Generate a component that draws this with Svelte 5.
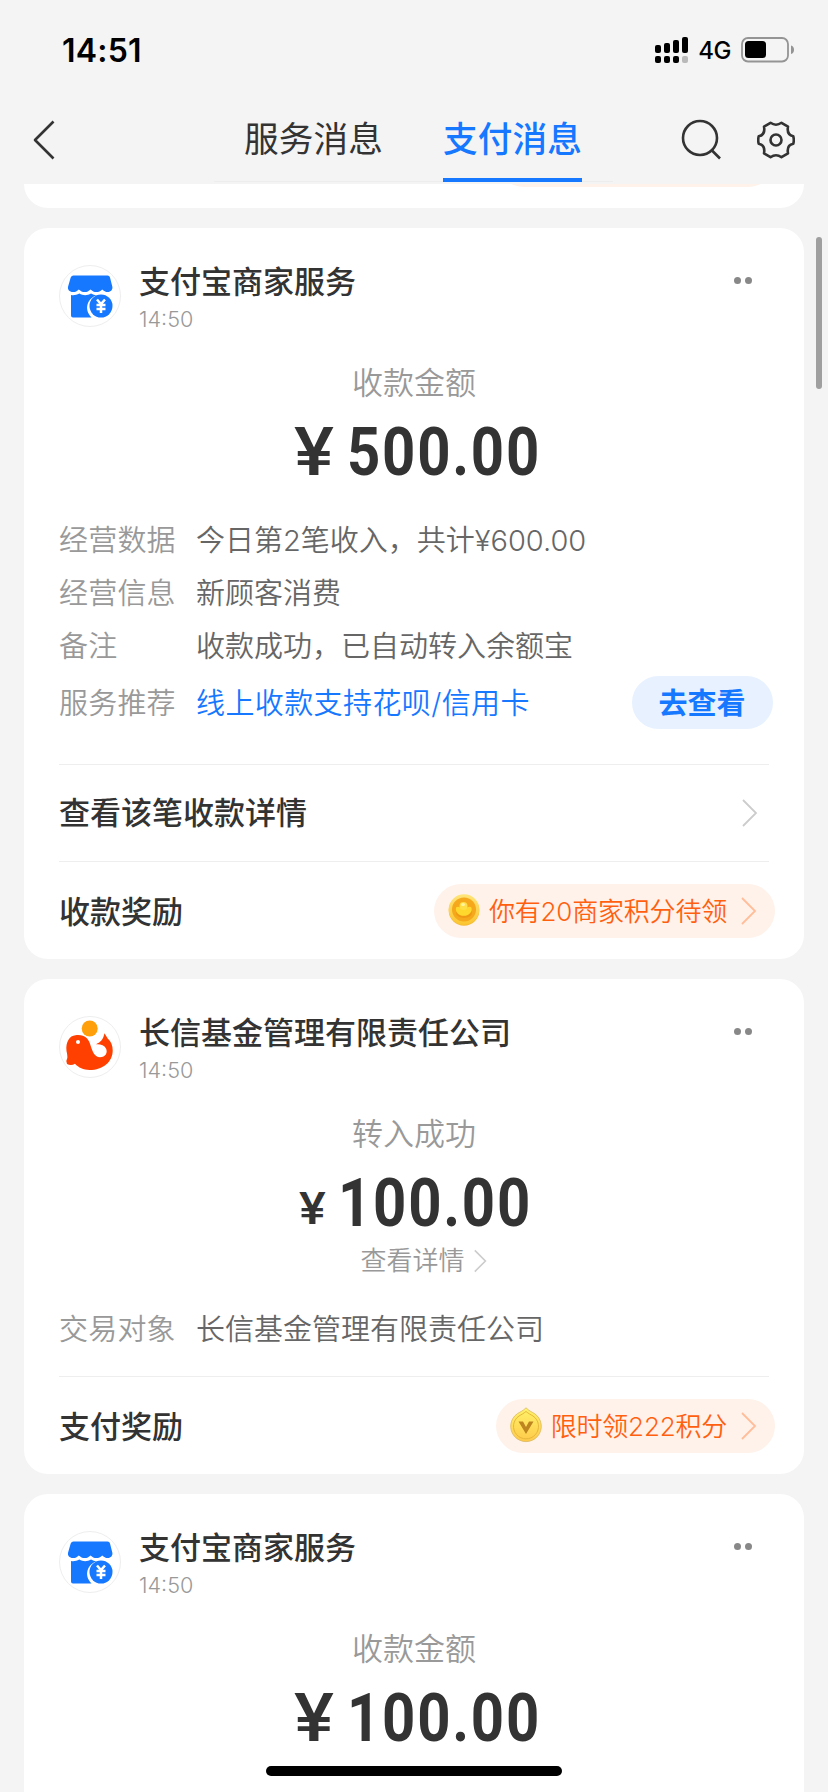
<script lang="ts">
  type Row = { label: string; value: string; action?: string };
  type Message = {
    sender: string;
    icon: "shop" | "fund";
    time: string;
    title: string;
    amount: string;
    smallSign?: boolean;
    more?: string;
    rows?: Row[];
    detail?: string;
    reward?: { label: string; text: string; coin: "ingot" | "drop" };
  };

  const messages: Message[] = [
    {
      sender: "支付宝商家服务",
      icon: "shop",
      time: "14:50",
      title: "收款金额",
      amount: "500.00",
      rows: [
        { label: "经营数据", value: "今日第2笔收入，共计¥600.00" },
        { label: "经营信息", value: "新顾客消费" },
        { label: "备注", value: "收款成功，已自动转入余额宝" },
        { label: "服务推荐", value: "线上收款支持花呗/信用卡", action: "去查看" },
      ],
      detail: "查看该笔收款详情",
      reward: { label: "收款奖励", text: "你有20商家积分待领", coin: "ingot" },
    },
    {
      sender: "长信基金管理有限责任公司",
      icon: "fund",
      time: "14:50",
      title: "转入成功",
      amount: "100.00",
      smallSign: true,
      more: "查看详情",
      rows: [{ label: "交易对象", value: "长信基金管理有限责任公司" }],
      reward: { label: "支付奖励", text: "限时领222积分", coin: "drop" },
    },
    {
      sender: "支付宝商家服务",
      icon: "shop",
      time: "14:50",
      title: "收款金额",
      amount: "100.00",
    },
  ];
</script>

{#snippet chevron(cls: string)}
  <svg class="chevron {cls}" viewBox="0 0 16 28"><path d="M1 1 14 14 1 27" /></svg>
{/snippet}

<div class="screen">
  <div class="status">
    <span class="clock">14:51</span>
    <div class="status-right">
      <svg class="signal" width="34" height="27" viewBox="0 0 34 27">
        <rect x="0" y="8" width="6" height="8" rx="2" />
        <rect x="9" y="6" width="6" height="10" rx="2" />
        <rect x="18" y="3" width="6" height="13" rx="2" />
        <rect x="27" y="0" width="6" height="16" rx="2" />
        <rect x="0" y="19" width="6" height="7" rx="2" />
        <rect x="9" y="19" width="6" height="7" rx="2" />
        <rect x="18" y="19" width="6" height="7" rx="2" />
        <rect x="27" y="19" width="6" height="7" rx="2" fill="#b9b9b9" />
      </svg>
      <span class="network">4G</span>
      <svg width="54" height="26" viewBox="0 0 54 26">
        <rect x="1" y="1" width="46" height="23.5" rx="6" fill="none" stroke="#949494" stroke-width="1.8" />
        <rect x="4" y="4" width="21" height="17" rx="3.5" />
        <path d="M50 8.5c4 1 4 7.500 0 8.500z" fill="#949494" />
      </svg>
    </div>
  </div>

  <nav class="nav">
    <svg class="back" width="24" height="40" viewBox="0 0 24 40"><path d="M21.500 1.500 3 20l18.500 18.500" /></svg>
    <div class="tabs">
      <div class="tab">服务消息</div>
      <div class="tab active">支付消息</div>
    </div>
    <svg class="tool search" width="42" height="42" viewBox="0 0 42 42">
      <circle cx="19" cy="19" r="17" />
      <path d="m30.500 31 8.500 8.500" />
    </svg>
    <svg class="tool" width="38" height="38" viewBox="0 0 38 38">
      <path d="M13.500 1.800Q19 5.600 24.500 1.800L31 5.600C30 11 32 14.500 36.300 15.300Q37.300 19 36.300 22.700C32 23.500 30 27 31 32.400L24.500 36.200Q19 32.400 13.500 36.200L7 32.400C8 27 6 23.500 1.700 22.700Q.7 19 1.700 15.300C6 14.500 8 11 7 5.600Z" />
      <circle cx="19" cy="19" r="5.500" />
    </svg>
  </nav>

  <main class="feed">
    <div class="card previous"><div class="previous-pill"></div></div>

    {#each messages as msg}
      <section class="card">
        <header class="head">
          <div class="avatar">
            {#if msg.icon === "shop"}
              <svg viewBox="0 0 60 60">
                <path fill="#1677ff" d="M13.500 9.500h34q2 0 2.500 2l2.300 9c.7 3-1.500 5.500-4.500 5.500-2.500 0-3.800-1.300-5.600-2.600-2 1.800-3.500 2.600-5.800 2.600s-4-1-5.900-2.600c-1.800 1.600-3.500 2.600-5.800 2.600s-4-1-5.900-2.600C17 25 15.500 26 13 26 9.500 26 7.300 23.500 8.100 20.500l2.600-9Q11.500 9.500 13.500 9.500z" />
                <path fill="#1677ff" d="M11 29c3 .6 5.700-.2 8.300-1.500 3.700 2.300 8 2.300 11.700 0q3.500 2 6 1.600C28 32 23 43 31.500 51.500H13q-2 0-2-2z" />
                <circle cx="41" cy="40" r="11.500" fill="#1677ff" />
                <path fill="none" stroke="#fff" stroke-width="2.500" d="m37 33.500 4 4.500 4-4.500M41 38v9M36.500 39h9M36.500 43h9" />
              </svg>
            {:else}
              <svg viewBox="0 0 60 60">
                <circle cx="29.700" cy="11.500" r="8" fill="#ff9f0a" />
                <path fill="#ff4001" d="M6.500 34C5.500 25 9.500 18.500 15.500 18.200c9-1 12.500 3 14.500 8.500C32.500 34 34 40 40 40.200c5.500 0 8-4.500 6-8.700-1.700-3.500-5.500-4.500-10-4.200 5-2.300 7.200-5 8.500-11l3.200 5.200c3.500 3 5 7 5 12C52.700 45 43 53 29.500 53c-6 0-11-2.300-14.500-6.200q-4 2.500-8 .2-1.500-3 .3-6c.3-1.500-.2-4.500-.8-7z" />
                <circle cx="18" cy="25" r="2" fill="#fff" />
              </svg>
            {/if}
          </div>
          <div class="who">
            <h2>{msg.sender}</h2>
            <time>{msg.time}</time>
          </div>
          <div class="dots"><i></i><i></i></div>
        </header>

        <div class="title">{msg.title}</div>
        <div class="amount" class:small-sign={msg.smallSign}>
          <span class="sign">¥</span><span class="digits">{msg.amount}</span>
        </div>
        {#if msg.more}
          <div class="more">{msg.more}{@render chevron("tiny")}</div>
        {/if}

        {#if msg.rows}
          <dl class="rows">
            {#each msg.rows as row}
              <div class="row" class:service={row.action}>
                <dt>{row.label}</dt>
                <dd>{row.value}</dd>
                {#if row.action}<button>{row.action}</button>{/if}
              </div>
            {/each}
          </dl>
        {/if}

        {#if msg.detail}
          <div class="link"><span>{msg.detail}</span>{@render chevron("grey")}</div>
        {/if}
        {#if msg.reward}
          <div class="link reward">
            <span>{msg.reward.label}</span>
            <div class="pill">
              {#if msg.reward.coin === "ingot"}
                <svg class="coin" width="32" height="34" viewBox="0 0 32 34">
                  <defs>
                    <linearGradient id="rim" x2="0" y2="1">
                      <stop offset="0" stop-color="#ffe57a" />
                      <stop offset="1" stop-color="#fbc52f" />
                    </linearGradient>
                  </defs>
                  <circle cx="16" cy="17.500" r="15.300" fill="#f4bc3a" />
                  <circle cx="16" cy="16.500" r="15.300" fill="url(#rim)" />
                  <circle cx="16" cy="16.500" r="12" fill="#f5a81c" />
                  <ellipse cx="16" cy="20" rx="8" ry="5" fill="#ee9914" />
                  <path fill="#ffd82e" d="M8 14.500q2-1.500 4 0h7q2.500-1.500 4.500 0c1 5-3 8.300-7.700 8.300S7 19.500 8 14.500z" />
                  <circle cx="15.500" cy="13" r="4" fill="#ffdf45" />
                  <ellipse cx="15" cy="11.500" rx="2" ry="1.500" fill="#fff3a0" />
                </svg>
              {:else}
                <svg class="coin" width="32" height="36" viewBox="0 0 32 36">
                  <defs>
                    <linearGradient id="drop" x2="0" y2="1">
                      <stop offset="0" stop-color="#fff36a" />
                      <stop offset="1" stop-color="#ffc94a" />
                    </linearGradient>
                  </defs>
                  <path fill="url(#drop)" stroke="#d9b860" stroke-width=".8" d="M16 .8c3 3 5.500 4 8.500 5.800a15.300 15.300 0 1 1-17 0C10.500 4.800 13 3.800 16 .8z" />
                  <path fill="none" stroke="#e6b73c" d="M16 4.500c2.500 2 4.500 3 7 4.500a12.500 12.500 0 1 1-14 0c2.500-1.500 4.500-2.500 7-4.500z" />
                  <path fill="#bd8420" d="M8.500 14.500h4.500l3 5.500 3-5.500h4.500L16 27z" />
                </svg>
              {/if}
              <span>{msg.reward.text}</span>
              {@render chevron("orange")}
            </div>
          </div>
        {/if}
      </section>
    {/each}
  </main>

  <div class="scrollbar"></div>
  <div class="home"></div>
</div>

<style>
  :global(body) { margin: 0; background: #f4f4f4; }

  .screen {
    position: relative;
    display: flex;
    flex-direction: column;
    width: 828px;
    height: 1792px;
    overflow: hidden;
    background: #f4f4f4;
    color: #333;
    font-family: Inter, "Noto Sans CJK SC", sans-serif;
  }

  /* Status bar */
  .status {
    display: flex;
    align-items: center;
    justify-content: space-between;
    flex: none;
    box-sizing: border-box;
    height: 96px;
    padding: 4px 33px 0 62px;
    color: #000;
  }
  .clock { font-size: 32px; font-weight: 600; letter-spacing: 0.2px; }
  .status-right { display: flex; align-items: center; }
  .network { margin: 1px 10px 0 9px; font-size: 24px; font-weight: 500; letter-spacing: -0.5px; }

  /* Navigation */
  .nav {
    display: flex;
    align-items: center;
    flex: none;
    box-sizing: border-box;
    height: 88px;
    padding: 0 33px 0 32px;
  }
  .back, .tool { flex: none; fill: none; stroke: #333; stroke-width: 2.6; stroke-linejoin: round; }
  .tabs {
    display: flex;
    justify-content: space-between;
    box-sizing: border-box;
    width: 400px;
    height: 86px;
    margin: 0 68px 0 158px;
    padding: 0 31px 0 30px;
    border-bottom: 1px solid #ededed;
    align-self: flex-start;
  }
  .tab {
    box-sizing: border-box;
    width: 139px;
    height: 86px;
    font-size: 34.7px;
    line-height: 87px;
    text-align: center;
    white-space: nowrap;
  }
  .tab.active {
    border-bottom: 4px solid #1677ff;
    color: #1677ff;
    font-weight: 500;
  }
  .search { margin-right: 34px; }

  /* Cards */
  .feed {
    display: flex;
    flex-direction: column;
    flex: 1;
    min-height: 0;
    gap: 20px;
    padding: 0 24px;
    overflow: hidden;
  }
  .card {
    flex: none;
    padding: 0 35px;
    border-radius: 24px;
    background: #fff;
  }
  .card:last-child { min-height: 730px; }
  .previous {
    display: flex;
    justify-content: flex-end;
    height: 24px;
    padding-right: 29px;
    border-radius: 0 0 24px 24px;
    overflow: hidden;
  }
  .previous-pill {
    width: 278px;
    height: 54px;
    margin-top: -51px;
    border-radius: 27px;
    background: #fff2ea;
  }
  .head { display: flex; height: 103px; }
  .avatar {
    box-sizing: border-box;
    width: 62px;
    height: 62px;
    margin-top: 37px;
    border: 1px solid #eee;
    border-radius: 50%;
  }
  .avatar svg { display: block; }
  .who { flex: 1; margin: 36px 0 0 18px; }
  h2 { margin: 0; font-size: 31px; font-weight: 500; line-height: 36px; }
  time {
    display: block;
    margin-top: 7px;
    color: #999;
    font-size: 21.6px;
    font-weight: 300;
    line-height: 24px;
  }
  .dots { display: flex; gap: 4px; margin: 49px 17px 0 0; }
  .dots i { width: 7px; height: 7px; border-radius: 50%; background: #888; }

  .title {
    margin-top: 32px;
    color: #999;
    font-size: 31px;
    font-weight: 350;
    line-height: 40px;
    text-align: center;
  }
  .amount {
    display: flex;
    align-items: baseline;
    justify-content: center;
    height: 68px;
    margin-top: 15px;
    padding-left: 7px;
    font-family: Roboto, sans-serif;
    font-size: 66px;
    font-weight: 600;
    line-height: 70px;
  }
  .sign {
    display: flex;
    justify-content: center;
    width: 38px;
    margin-right: 14px;
    font-weight: 500;
    transform: scaleX(1.14);
  }
  /* Roboto squeezed to narrow, DIN-like figures */
  .digits {
    width: 193px;
    font-weight: 700;
    letter-spacing: 2px;
    transform: scaleX(0.88);
    transform-origin: left;
  }
  .small-sign { padding-left: 3px; }
  .small-sign .sign {
    width: 25px;
    margin-right: 13px;
    font-size: 45px;
    line-height: 1;
    transform: translateY(-2px) scaleX(1.12);
  }
  .more {
    display: flex;
    align-items: center;
    justify-content: center;
    margin-top: 6px;
    padding-left: 19px;
    color: #999;
    font-size: 26px;
    font-weight: 350;
    line-height: 36px;
  }

  .rows { margin: 27px 0 35px; font-size: 29px; font-weight: 350; }
  .more + .rows { margin: 23px 0 21px; }
  .row { display: flex; height: 53px; line-height: 55px; white-space: nowrap; }
  dt { width: 137px; color: #999; letter-spacing: 0.2px; }
  dd { flex: 1; margin: 0; color: #666; }
  .service { margin-top: 4px; }
  .service dd { color: #1677ff; letter-spacing: 0.4px; }
  button {
    width: 141px;
    height: 53px;
    margin-right: -4px;
    padding: 2px 1px 0 0;
    border: none;
    border-radius: 27px;
    background: #e7f1ff;
    color: #1677ff;
    font: 700 29px/51px Inter, "Noto Sans CJK SC", sans-serif;
  }

  .link {
    display: flex;
    align-items: center;
    justify-content: space-between;
    box-sizing: border-box;
    height: 97px;
    border-top: 1px solid #eee;
    font-size: 31px;
    font-weight: 500;
  }
  .link > span { padding-bottom: 5px; }
  .reward { height: 98px; }
  .link.reward > span { padding-bottom: 2px; }
  .pill {
    display: flex;
    align-items: center;
    box-sizing: border-box;
    height: 54px;
    margin: 1px -6px 0 0;
    padding: 0 18px 0 14px;
    border-radius: 27px;
    background: #fff2ea;
    color: #ff6010;
    font-size: 26px;
    font-weight: 350;
    letter-spacing: -0.2px;
  }
  .pill span { padding-bottom: 3px; }
  .coin { margin: -2px 9px 0 0; }

  .chevron { width: 16px; height: 28px; fill: none; stroke-width: 1.8; }
  .grey { margin-right: 11px; stroke: #ccc; }
  .tiny { width: 13px; height: 24px; margin-left: 9px; stroke: #ccc; stroke-width: 2; }
  .orange { margin-left: 14px; stroke: #ffbd9a; }

  /* Overlays */
  .scrollbar {
    position: absolute;
    top: 237px;
    right: 6px;
    width: 6px;
    height: 152px;
    border-radius: 3px;
    background: #9f9f9f;
  }
  .home {
    position: absolute;
    bottom: 16px;
    left: 266px;
    width: 296px;
    height: 10px;
    border-radius: 5px;
    background: #000;
  }
</style>
